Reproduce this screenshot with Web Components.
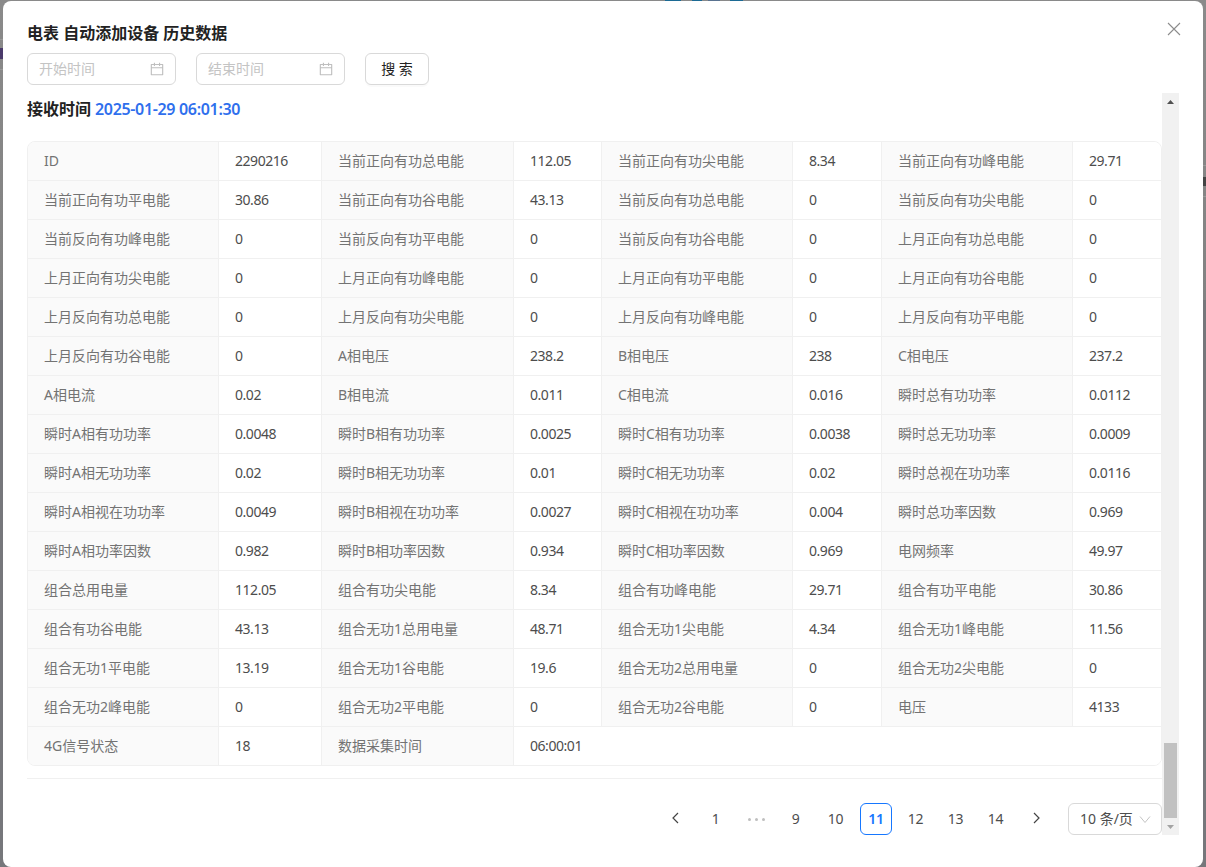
<!DOCTYPE html>
<html lang="zh">
<head>
<meta charset="utf-8">
<title>电表 历史数据</title>
<style>
html,body{margin:0;height:867px;overflow:hidden;background:#808080}
body{font:14px "Noto Sans","Noto Sans CJK SC",sans-serif;color:#333}
</style>
</head>
<body>
<backdrop-page></backdrop-page>
<history-modal heading="电表 自动添加设备 历史数据">
  <date-input placeholder="开始时间"></date-input>
  <date-input placeholder="结束时间"></date-input>
  <search-button>搜 索</search-button>
  <record-block slot="body" label="接收时间" time="2025-01-29 06:01:30"></record-block>
  <page-bar slot="body"></page-bar>
</history-modal>
<script>
const FONT='"Noto Sans","Noto Sans CJK SC",sans-serif';
const CAL='M880 184H712v-64c0-4.4-3.6-8-8-8h-56c-4.4 0-8 3.6-8 8v64H384v-64c0-4.4-3.6-8-8-8h-56c-4.4 0-8 3.6-8 8v64H144c-17.7 0-32 14.3-32 32v664c0 17.7 14.3 32 32 32h736c17.7 0 32-14.3 32-32V216c0-17.7-14.3-32-32-32zm-40 656H184V460h656v380zM184 392V256h128v48c0 4.4 3.6 8 8 8h56c4.4 0 8-3.6 8-8v-48h256v48c0 4.4 3.6 8 8 8h56c4.4 0 8-3.6 8-8v-48h128v136H184z';
function shadow(el,html){el.attachShadow({mode:'open'}).innerHTML=html;}

customElements.define('backdrop-page',class extends HTMLElement{connectedCallback(){
  shadow(this,`<style>
  :host{position:fixed;inset:0;display:block;background:linear-gradient(#8a8a8a 0,#828282 300px,#76777b 300px,#76777b 867px)}
  i{position:absolute;display:block}
  </style>
  <i style="left:0;top:48px;width:3px;height:11px;background:#4a3a6a"></i>
  <i style="left:0;top:39px;width:3px;height:1px;background:#999"></i>
  <i style="left:0;top:69px;width:3px;height:1px;background:#999"></i>
  <i style="right:0;top:165px;width:3px;height:1px;background:#999"></i>
  <i style="right:0;top:177px;width:3px;height:9px;background:#444"></i>
  <i style="right:0;top:196px;width:3px;height:1px;background:#999"></i>
  <i style="left:665px;top:0;width:16px;height:1px;background:#1c6a94"></i>
  <i style="left:692px;top:0;width:10px;height:1px;background:#1c6a94"></i>
  <i style="left:708px;top:0;width:12px;height:1px;background:#5a7390"></i>
  <i style="left:730px;top:0;width:13px;height:1px;background:#1c6a94"></i>`);
}});

customElements.define('history-modal',class extends HTMLElement{connectedCallback(){
  shadow(this,`<style>
  :host{position:fixed;left:3px;top:1px;width:1200px;height:866px;box-sizing:border-box;display:flex;flex-direction:column;
    padding:20px 24px 0;background:#fff;border-radius:8px;font-family:${FONT}}
  h2{margin:0 0 8px;font-size:16px;line-height:24px;font-weight:600;color:#222;height:24px}
  .tools{display:flex;gap:20px;height:32px;margin-bottom:8px}
  .scroll{display:flex;height:742px}
  .content{width:1135px;display:flex;flex-direction:column}
  .close{position:absolute;right:22px;top:21px;width:14px;height:14px;display:block}
  </style>
  <h2>${this.getAttribute('heading')}</h2>
  <svg class="close" viewBox="0 0 14 14" fill="none" stroke="#8c8c8c" stroke-width="1.1"><path d="M1 1l12 12M13 1L1 13"/></svg>
  <div class="tools"><slot></slot></div>
  <div class="scroll"><div class="content"><slot name="body"></slot></div><fake-scroll></fake-scroll></div>`);
}});

customElements.define('date-input',class extends HTMLElement{connectedCallback(){
  shadow(this,`<style>
  :host{display:flex;align-items:center;justify-content:space-between;box-sizing:border-box;width:149px;height:32px;padding:0 11px;
    border:1px solid #d9d9d9;border-radius:6px;background:#fff;color:#c4c4c4;font-size:14px}
  span{position:relative;top:-1px}
  svg{width:14px;height:14px;fill:#bfbfbf;display:block}
  </style><span>${this.getAttribute('placeholder')}</span><svg viewBox="64 64 896 896"><path d="${CAL}"/></svg>`);
}});

customElements.define('search-button',class extends HTMLElement{connectedCallback(){
  shadow(this,`<style>
  :host{display:flex;align-items:center;justify-content:center;box-sizing:border-box;width:64px;height:32px;padding-bottom:2px;
    border:1px solid #d9d9d9;border-radius:6px;background:#fff;color:#222;font-size:14px;box-shadow:0 2px 0 rgba(0,0,0,.02);white-space:pre}
  </style><slot></slot>`);
}});

customElements.define('record-block',class extends HTMLElement{connectedCallback(){
  shadow(this,`<style>
  :host{display:block}
  .head{height:24px;margin:4px 0 20px;line-height:24px;font-size:16px;font-weight:600;color:#222;display:flex;gap:4px}
  .head b{font-weight:600;color:#2f6fed;letter-spacing:-.33px}
  hr{border:0;border-top:1px solid #f0f0f0;margin:12px 0 24px}
  </style>
  <div class="head"><span>${this.getAttribute('label')}</span><b>${this.getAttribute('time')}</b></div>
  <desc-table></desc-table><hr>`);
}});

const DATA=[['ID','2290216'],['当前正向有功总电能','112.05'],['当前正向有功尖电能','8.34'],['当前正向有功峰电能','29.71'],
['当前正向有功平电能','30.86'],['当前正向有功谷电能','43.13'],['当前反向有功总电能','0'],['当前反向有功尖电能','0'],
['当前反向有功峰电能','0'],['当前反向有功平电能','0'],['当前反向有功谷电能','0'],['上月正向有功总电能','0'],
['上月正向有功尖电能','0'],['上月正向有功峰电能','0'],['上月正向有功平电能','0'],['上月正向有功谷电能','0'],
['上月反向有功总电能','0'],['上月反向有功尖电能','0'],['上月反向有功峰电能','0'],['上月反向有功平电能','0'],
['上月反向有功谷电能','0'],['A相电压','238.2'],['B相电压','238'],['C相电压','237.2'],
['A相电流','0.02'],['B相电流','0.011'],['C相电流','0.016'],['瞬时总有功功率','0.0112'],
['瞬时A相有功功率','0.0048'],['瞬时B相有功功率','0.0025'],['瞬时C相有功功率','0.0038'],['瞬时总无功功率','0.0009'],
['瞬时A相无功功率','0.02'],['瞬时B相无功功率','0.01'],['瞬时C相无功功率','0.02'],['瞬时总视在功功率','0.0116'],
['瞬时A相视在功功率','0.0049'],['瞬时B相视在功功率','0.0027'],['瞬时C相视在功功率','0.004'],['瞬时总功率因数','0.969'],
['瞬时A相功率因数','0.982'],['瞬时B相功率因数','0.934'],['瞬时C相功率因数','0.969'],['电网频率','49.97'],
['组合总用电量','112.05'],['组合有功尖电能','8.34'],['组合有功峰电能','29.71'],['组合有功平电能','30.86'],
['组合有功谷电能','43.13'],['组合无功1总用电量','48.71'],['组合无功1尖电能','4.34'],['组合无功1峰电能','11.56'],
['组合无功1平电能','13.19'],['组合无功1谷电能','19.6'],['组合无功2总用电量','0'],['组合无功2尖电能','0'],
['组合无功2峰电能','0'],['组合无功2平电能','0'],['组合无功2谷电能','0'],['电压','4133'],
['4G信号状态','18'],['数据采集时间','06:00:01']];

customElements.define('desc-table',class extends HTMLElement{connectedCallback(){
  const cells=DATA.map(([k,v],i)=>`<div class="k">${k}</div><div class="v${i===DATA.length-1?' last':''}">${v}</div>`).join('');
  shadow(this,`<style>
  :host{display:block;box-sizing:border-box;width:1135px;border:1px solid #f0f0f0;border-radius:8px;overflow:hidden;font-size:14px}
  .g{display:grid;grid-template-columns:191px 103px 192px 88px 191px 89px 191px 88px;grid-auto-rows:39px;margin-bottom:-1px}
  .k,.v{box-sizing:border-box;padding:0 16px 2px;display:flex;align-items:center;border-bottom:1px solid #f0f0f0;border-right:1px solid #f0f0f0;white-space:nowrap}
  .k{background:#fafafa;color:#737373}
  .v{background:#fff;color:#4d4d4d;letter-spacing:-.45px}
  .v:nth-child(8n){border-right:0}
  .last{grid-column:span 5;border-right:0}
  </style><div class="g">${cells}</div>`);
}});

customElements.define('page-bar',class extends HTMLElement{connectedCallback(){
  const chev=d=>`<span class="i"><svg width="12" height="12" viewBox="0 0 12 12" fill="none" stroke="#444" stroke-width="1.2"><path d="${d}"/></svg></span>`;
  const n=(t,c='')=>`<span class="i ${c}">${t}</span>`;
  shadow(this,`<style>
  :host{display:flex;justify-content:flex-end;gap:8px;height:32px;font-size:14px;color:#4d4d4d;letter-spacing:-.3px}
  .i{width:32px;height:32px;box-sizing:border-box;display:flex;align-items:center;justify-content:center;padding:0 1px 2px 0}
  .on{border:1px solid #1677ff;border-radius:6px;color:#1677ff;font-weight:600;padding:0 0 2px}
  .dots{gap:4px;padding:0}
  .dots b{width:3px;height:3px;border-radius:50%;background:#bfbfbf}
  .sel{margin-left:8px;width:94px;box-sizing:border-box;height:32px;border:1px solid #d9d9d9;border-radius:6px;padding:0 10px 2px 11px;display:flex;align-items:center;justify-content:space-between;letter-spacing:0;white-space:nowrap}
  .sel svg{margin-top:2px}
  </style>
  ${chev('M8 1L3 6l5 5')}${n('1')}<span class="i dots"><b></b><b></b><b></b></span>${n('9')}${n('10')}${n('11','on')}${n('12')}${n('13')}${n('14')}${chev('M4 1l5 5-5 5')}
  <span class="sel"><span>10 条/页</span><svg width="12" height="12" viewBox="0 0 12 12" fill="none" stroke="#c4c4c4" stroke-width="1"><path d="M1 3.5l5 6 5-6"/></svg></span>`);
}});

customElements.define('fake-scroll',class extends HTMLElement{connectedCallback(){
  shadow(this,`<style>
  :host{display:flex;flex-direction:column;width:17px;height:742px;background:#f1f1f1}
  .up,.down{height:17px;display:flex;align-items:center;justify-content:center}
  .sp{flex:1}
  .th{height:75px;margin:0 2px;background:#c1c1c1;flex:none}
  </style>
  <div class="up"><svg width="9" height="6" viewBox="0 0 9 6"><path d="M4.5 1L8 5H1z" fill="#505050"/></svg></div>
  <div class="sp"></div><div class="th"></div>
  <div class="down"><svg width="9" height="6" viewBox="0 0 9 6"><path d="M4.5 5L8 1H1z" fill="#a3a3a3"/></svg></div>`);
}});
</script>
</body>
</html>
